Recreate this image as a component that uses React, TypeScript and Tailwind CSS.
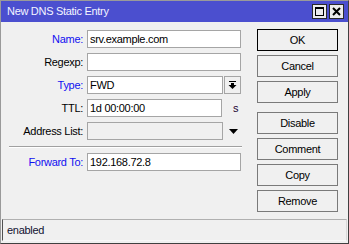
import React from "react";

const font = { fontFamily: '"Liberation Sans", Arial, sans-serif' };

function Row({ label, blue, children }: { label: string; blue?: boolean; children: React.ReactNode }) {
  return (
    <div className="flex h-[18px] items-center">
      <div className={`w-[82px] shrink-0 text-right ${blue ? "text-[#1010f0]" : "text-black"}`}>{label}</div>
      <div className="ml-[4px] flex items-center">{children}</div>
    </div>
  );
}

function Input({ w, value, disabled }: { w: number; value?: string; disabled?: boolean }) {
  return (
    <div
      className={`flex h-[18px] items-center border border-[#a5a5a5] pl-[2px] text-black ${disabled ? "bg-[#f0f0f0]" : "bg-white"}`}
      style={{ width: w }}
    >
      {value}
    </div>
  );
}

function Btn({ label, def }: { label: string; def?: boolean }) {
  return (
    <div
      className={`flex h-[22px] w-[81px] items-center justify-center border bg-[#f0f0f0] text-black ${def ? "border-black" : "border-[#7a7a7a]"}`}
    >
      {label}
    </div>
  );
}

export default function App() {
  return (
    <div
      className="flex h-[244px] w-[349px] flex-col border border-l-[#9a9a9a] border-t-[#9a9a9a] border-r-[#404040] border-b-[#404040] bg-[#f0f0f0] text-[11px] tracking-[-0.3px]"
      style={font}
    >
      <div className="flex h-[21px] shrink-0 items-center bg-[#4b4fcf] pl-[6px] pr-[4px]">
        <div className="flex-1 text-[11px] text-[#f4f4ff]">New DNS Static Entry</div>
        <div className="flex gap-[2px]">
          <div className="flex h-[15px] w-[15px] items-center justify-center border border-[#2a2a2a] bg-[#ececec]">
            <div className="h-[9px] w-[9px] border border-t-2 border-black" />
          </div>
          <div className="flex h-[15px] w-[15px] items-center justify-center border border-[#2a2a2a] bg-[#ececec]">
            <svg width="9" height="9" viewBox="0 0 9 9">
              <path d="M1 1 L8 8 M8 1 L1 8" stroke="black" strokeWidth="2" />
            </svg>
          </div>
        </div>
      </div>

      <div className="flex flex-1">
        <div className="flex w-[241px] flex-col gap-[5px] pt-[8px]">
          <Row label="Name:" blue>
            <Input w={154} value="srv.example.com" />
          </Row>
          <Row label="Regexp:">
            <Input w={154} />
          </Row>
          <Row label="Type:" blue>
            <Input w={136} value="FWD" />
            <div className="ml-[1px] flex h-[18px] w-[17px] items-center justify-center border border-[#a5a5a5] bg-[#f0f0f0]">
              <svg width="9" height="8" viewBox="0 0 9 8">
                <rect x="1" y="0" width="7" height="1" fill="black" />
                <rect x="3" y="2" width="3" height="2" fill="black" />
                <path d="M0.5 4 L8.5 4 L4.5 8 Z" fill="black" />
              </svg>
            </div>
          </Row>
          <Row label="TTL:">
            <Input w={135} value="1d 00:00:00" />
            <span className="ml-[11px] text-[#200030]">s</span>
          </Row>
          <Row label="Address List:">
            <Input w={136} disabled />
            <svg className="ml-[6px]" width="9" height="5" viewBox="0 0 9 5">
              <path d="M0 0 L9 0 L4.5 5 Z" fill="black" />
            </svg>
          </Row>
          <div className="ml-[8px] mt-[1px] h-[2px] border-t border-[#a0a0a0] border-b border-b-white" />
          <Row label="Forward To:" blue>
            <Input w={154} value="192.168.72.8" />
          </Row>
        </div>

        <div className="ml-[15px] flex flex-col pt-[7px]">
          <div className="flex flex-col gap-[4px]">
            <Btn label="OK" def />
            <Btn label="Cancel" />
            <Btn label="Apply" />
          </div>
          <div className="mt-[9px] flex flex-col gap-[4px]">
            <Btn label="Disable" />
            <Btn label="Comment" />
            <Btn label="Copy" />
            <Btn label="Remove" />
          </div>
        </div>
      </div>

      <div className="mx-[1px] mb-[2px] flex h-[22px] shrink-0 items-center border-l border-t border-r border-b border-l-[#505050] border-t-[#b0b0b0] border-r-[#d8d8d8] border-b-[#f8f8f8] pl-[4px] text-[#101030]">
        enabled
      </div>
    </div>
  );
}
